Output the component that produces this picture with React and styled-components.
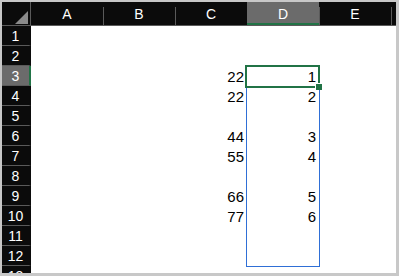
import React from "react";
import styled, { createGlobalStyle } from "styled-components";

const Global = createGlobalStyle`
  html, body { margin: 0; padding: 0; background: #c8c8c8; }
  body { font-family: Arial, "Liberation Sans", sans-serif; }
`;

const Frame = styled.div`
  width: 399px;
  height: 276px;
  box-sizing: border-box;
  padding: 2px 3px 3px 2px;
  background: #c8c8c8;
`;

const Sheet = styled.div`
  position: relative;
  width: 394px;
  height: 271px;
  overflow: hidden;
  background: #ffffff;
  font-family: "Liberation Sans", Arial, sans-serif;
`;

const HeaderRow = styled.div`
  display: flex;
  height: 24px;
  background: #0b0b0b;
  border-bottom: 1px solid #5a5a5a;
  box-sizing: border-box;
`;

const Corner = styled.div`
  position: relative;
  width: 29px;
  flex: none;
  box-sizing: border-box;
  border-right: 1px solid #5a5a5a;
  svg { position: absolute; right: 2px; bottom: 1px; }
`;

const ColHeader = styled.div`
  position: relative;
  width: 72px;
  flex: none;
  display: flex;
  align-items: center;
  justify-content: center;
  box-sizing: border-box;
  color: #ffffff;
  font-size: 14px;
  padding-top: 2px;
  background: ${(p) => (p.$selected ? "#6b6b6b" : "transparent")};
  border-bottom: 2px solid ${(p) => (p.$selected ? "#217346" : "transparent")};
  &::after {
    content: "";
    position: absolute;
    right: -1px;
    top: 5px;
    bottom: -2px;
    width: 1px;
    background: #5a5a5a;
  }
`;

const Filler = styled.div`
  flex: 1;
`;

const Row = styled.div`
  display: flex;
  height: 20px;
`;

const RowHeader = styled.div`
  width: 29px;
  flex: none;
  box-sizing: border-box;
  display: flex;
  align-items: center;
  justify-content: center;
  color: #ffffff;
  font-size: 14px;
  padding-top: 1px;
  background: ${(p) => (p.$selected ? "#6b6b6b" : "#0b0b0b")};
  border-bottom: 1px solid #5a5a5a;
  border-right: 2px solid ${(p) => (p.$selected ? "#217346" : "#0b0b0b")};
`;

const Cell = styled.div`
  width: 72px;
  flex: none;
  box-sizing: border-box;
  text-align: right;
  padding: 1px 3px 0 0;
  line-height: 20px;
  font-size: 15px;
  color: #000000;
`;

const ActiveCell = styled.div`
  position: absolute;
  left: 243px;
  top: 63px;
  width: 75px;
  height: 23px;
  box-sizing: border-box;
  border: 2px solid #217346;
`;

const Handle = styled.div`
  position: absolute;
  left: 313px;
  top: 81px;
  width: 6px;
  height: 6px;
  background: #217346;
  border-left: 1px solid #ffffff;
  border-top: 1px solid #ffffff;
`;

const RangeBox = styled.div`
  position: absolute;
  left: 244px;
  top: 86px;
  width: 74px;
  height: 179px;
  box-sizing: border-box;
  border: 1px solid #2f6fd6;
  border-top: none;
`;

const cols = ["A", "B", "C", "D", "E"];
const data = {
  3: { C: "22", D: "1" },
  4: { C: "22", D: "2" },
  6: { C: "44", D: "3" },
  7: { C: "55", D: "4" },
  9: { C: "66", D: "5" },
  10: { C: "77", D: "6" },
};

export default function App() {
  const rows = Array.from({ length: 13 }, (_, i) => i + 1);
  return (
    <Frame>
      <Global />
      <Sheet>
        <HeaderRow>
          <Corner>
            <svg width="13" height="13" viewBox="0 0 13 13">
              <polygon points="13,0 13,13 0,13" fill="#8a8a8a" />
            </svg>
          </Corner>
          {cols.map((c) => (
            <ColHeader key={c} $selected={c === "D"}>
              {c}
            </ColHeader>
          ))}
          <Filler />
        </HeaderRow>
        {rows.map((r) => (
          <Row key={r}>
            <RowHeader $selected={r === 3}>{r}</RowHeader>
            {cols.map((c) => (
              <Cell key={c}>{data[r] && data[r][c]}</Cell>
            ))}
          </Row>
        ))}
        <RangeBox />
        <ActiveCell />
        <Handle />
      </Sheet>
    </Frame>
  );
}
